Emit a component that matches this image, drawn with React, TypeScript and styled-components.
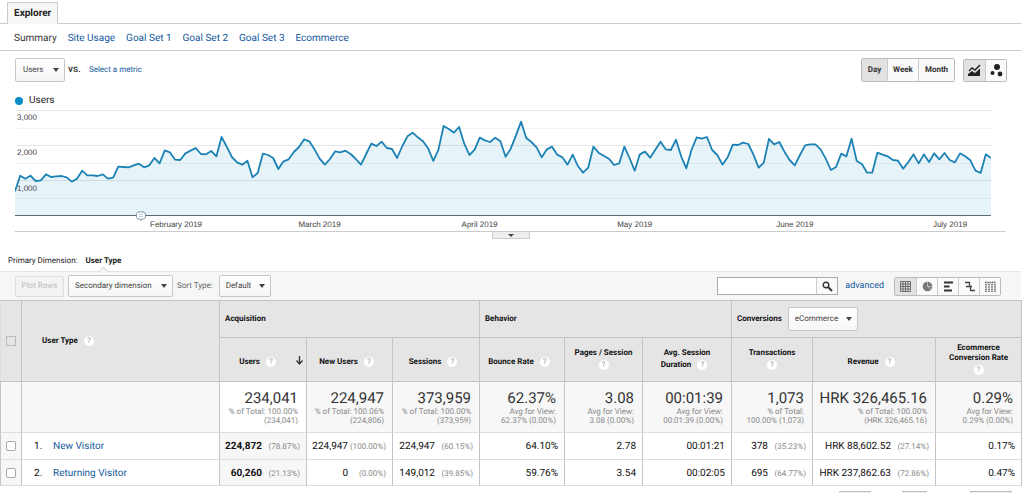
import React from "react";
import styled, { createGlobalStyle } from "styled-components";

const GlobalStyle = createGlobalStyle`
  * { box-sizing: border-box; }
  body {
    margin: 0;
    background: #fff;
    color: #333;
    font: 8px/10px Roboto, "Liberation Sans", sans-serif;
    text-rendering: geometricPrecision;
  }
  button, input, select { font: inherit; color: inherit; text-rendering: inherit; }
  a { color: #15599e; text-decoration: none; }
`;

const Page = styled.main`
  overflow: hidden;
  padding-right: 3px;
`;

const TabBar = styled.div`
  display: flex;
  height: 24px;
  padding: 2px 7px 0;
  border-bottom: 1px solid #ccc;
`;

const Tab = styled.button`
  height: 22px;
  padding: 0 6px;
  border: 1px solid #ccc;
  border-bottom: 0;
  background: #f7f7f7;
  color: #222;
  font-size: 10px;
  font-weight: 700;
`;

const SubNav = styled.nav`
  display: flex;
  align-items: center;
  gap: 11px;
  height: 27px;
  padding: 3px 14px 0;
  border-bottom: 1px solid #ccc;
  font-size: 10px;
`;

const Controls = styled.div`
  display: flex;
  align-items: center;
  gap: 8px;
  height: 38px;
  padding: 0 14px 0 15px;
`;

const Versus = styled.span`
  margin-left: -5px;
  font-size: 10px;
  font-weight: 500;
`;

const Spacer = styled.div`
  flex: 1;
`;

const SelectWrap = styled.span<{ $width: number; $height: number }>`
  position: relative;
  display: inline-flex;
  width: ${(p) => p.$width}px;
  height: ${(p) => p.$height}px;

  &::after {
    content: "";
    position: absolute;
    right: 6px;
    top: calc(50% - 2px);
    border: 3px solid transparent;
    border-top: 4px solid #444;
    border-bottom: 0;
    pointer-events: none;
  }
`;

const SelectBox = styled.select<{ $pad: number }>`
  appearance: none;
  width: 100%;
  padding: 0 0 0 ${(p) => p.$pad}px;
  border: 1px solid #c6c6c6;
  border-radius: 2px;
  background: linear-gradient(#fff, #f6f6f6);
  color: #444;
  font-weight: 400;
`;

const Group = styled.div`
  display: flex;
  border: 1px solid #bbb;
  border-radius: 2px;
`;

const GroupButton = styled.button<{ $width: number; $height: number; $active?: boolean }>`
  display: flex;
  align-items: center;
  justify-content: center;
  width: ${(p) => p.$width}px;
  height: ${(p) => p.$height}px;
  padding: 0;
  border: 0;
  border-left: 1px solid #ccc;
  background: ${(p) => (p.$active ? "#e2e2e2" : "#fafafa")};
  color: #333;
  font-weight: 700;

  &:first-child { border-left: 0; }
`;

const Legend = styled.div`
  display: flex;
  align-items: center;
  gap: 6px;
  height: 21px;
  padding: 3px 0 0 15px;
  font-size: 10px;
  color: #222;
`;

const Dot = styled.span`
  width: 8px;
  height: 8px;
  border-radius: 50%;
  background: #058dc7;
`;

const ChartArea = styled.div`
  margin: 0 15px;
  border-bottom: 1px solid #ccc;
`;

const ChartSvg = styled.svg`
  display: block;
  width: calc(100% - 15px);
  height: 121px;
  overflow: visible;

  text {
    font: 8px "Liberation Sans", Arial, sans-serif;
    fill: #444;
  }
`;

const Handle = styled.button`
  display: flex;
  align-items: center;
  justify-content: center;
  width: 38px;
  height: 7px;
  margin: 0 auto;
  padding: 0;
  border: 1px solid #ccc;
  border-top: 0;
  background: #eee;
`;

const Dimension = styled.div`
  display: flex;
  gap: 8px;
  height: 32px;
  padding: 17px 8px 0;
  color: #222;
`;

const CurrentDimension = styled.strong`
  position: relative;
  font-weight: 700;

  &::after {
    content: "";
    position: absolute;
    left: 15px;
    top: 12px;
    width: 6px;
    height: 6px;
    border: 1px solid #ddd;
    border-width: 1px 0 0 1px;
    background: #f6f6f6;
    transform: rotate(45deg);
  }
`;

const Toolbar = styled.div`
  display: flex;
  align-items: center;
  gap: 4px;
  height: 29px;
  padding: 0 20px 0 15px;
  border-top: 1px solid #e4e4e4;
  background: #f6f6f6;
`;

const PlotButton = styled.button`
  width: 49px;
  height: 21px;
  padding: 0;
  border: 1px solid #ddd;
  border-radius: 2px;
  background: #f3f3f3;
  color: #bbb;
`;

const SortLabel = styled.label`
  display: flex;
  align-items: center;
  gap: 6px;
  color: #666;
`;

const Search = styled.form`
  display: flex;
  width: 121px;
  height: 18px;
  border: 1px solid #aaa;
`;

const SearchInput = styled.input`
  flex: 1;
  min-width: 0;
  padding: 0 4px;
  border: 0;
  background: #fff;
`;

const SearchButton = styled.button`
  display: flex;
  align-items: center;
  justify-content: center;
  width: 21px;
  padding: 0;
  border: 0;
  border-left: 1px solid #ccc;
  background: #fafafa;
`;

const Advanced = styled.a`
  margin: 0 6px 0 3px;
  font-size: 9px;
`;

const DataTable = styled.table`
  width: 100%;
  table-layout: fixed;
  border-spacing: 0;
  border-right: 1px solid #c4c4c4;
`;

const HeadCell = styled.th<{ $align?: string; $pad?: string }>`
  position: relative;
  height: ${(p) => (p.$align === "left" ? 37 : 44)}px;
  padding: ${(p) => p.$pad ?? "0"};
  border-left: 1px solid #c4c4c4;
  border-top: 1px solid #c4c4c4;
  background: #e5e5e5;
  color: #111;
  font-weight: 700;
  text-align: ${(p) => p.$align ?? "center"};
  vertical-align: middle;

  &:first-child[rowspan] { border-left-color: #ddd; }
`;

const ConversionGroup = styled.label`
  display: flex;
  align-items: center;
  gap: 6px;
`;

const HelpMark = styled.span`
  display: inline-block;
  width: 10px;
  height: 10px;
  margin: 2px 6px;
  border-radius: 50%;
  background: #fff;
  color: #999;
  font-size: 8px;
  font-weight: 400;
  line-height: 10px;
  text-align: center;
  vertical-align: middle;
`;

const SortArrow = styled.svg`
  position: absolute;
  right: 2px;
  top: 17px;
`;

const TotalCell = styled.td<{ $plain?: boolean }>`
  height: 51px;
  padding: 0 8px 0 0;
  border-left: 1px solid #c4c4c4;
  border-top: 1px solid #c4c4c4;
  background: ${(p) => (p.$plain ? "#fff" : "#f7f7f7")};
  color: #888;
  line-height: 9px;
  text-align: right;
  white-space: nowrap;
`;

const BigNumber = styled.div`
  color: #333;
  font-size: 15px;
  line-height: 18px;
`;

const Cell = styled.td<{ $sorted?: boolean; $align?: string; $pad?: string }>`
  height: 27px;
  padding: ${(p) => p.$pad ?? "2px 6px 0 0"};
  border-left: 1px solid #c4c4c4;
  border-top: 1px solid #ddd;
  background: ${(p) => (p.$sorted ? "#f7f7f7" : "#fff")};
  color: #111;
  font-size: 10px;
  font-weight: ${(p) => (p.$sorted ? 700 : 400)};
  text-align: ${(p) => p.$align ?? "right"};
  white-space: nowrap;

  tr:last-child > & { border-bottom: 1px solid #ddd; }
`;

const Share = styled.span`
  display: inline-block;
  min-width: 38px;
  color: #888;
  font-size: 8px;
  font-weight: 400;
`;

const RowNumber = styled.span`
  display: inline-block;
  width: 19px;
`;

const CheckBox = styled.input`
  appearance: none;
  display: block;
  width: 10px;
  height: 10px;
  margin: 0 auto;
  border: 1px solid #aaa;
  border-radius: 2px;
  background: #fff;

  &:disabled {
    border-color: #bbb;
    border-radius: 0;
    background: #e5e5e5;
  }
`;

const Pager = styled.footer`
  display: flex;
  justify-content: flex-end;
  gap: 31px;
  height: 7px;
  padding: 5px 9px 0;
`;

const PagerControl = styled.span<{ $width: number }>`
  width: ${(p) => p.$width}px;
  border-top: 1px solid #bbb;
  background: #eee;

  &:last-child { margin-left: 12px; }
`;

/* Daily heights, measured down from the top of the plot; the axis is at 316. */
const daily = [
  244, 197, 206, 197, 213, 211, 193, 201, 199, 198, 202, 215, 206, 182, 196, 196, 198, 193, 206, 203,
  170, 171, 172, 166, 161, 172, 166, 144, 160, 121, 127, 149, 150, 130, 122, 114, 132, 133, 123, 139,
  81, 110, 141, 157, 164, 152, 202, 189, 131, 135, 144, 177, 154, 148, 126, 111, 88, 94, 118, 146,
  164, 147, 124, 127, 122, 132, 147, 164, 132, 101, 108, 95, 114, 117, 144, 108, 79, 68, 82, 94,
  115, 153, 119, 48, 57, 68, 51, 101, 135, 119, 83, 91, 96, 83, 94, 140, 116, 77, 35, 84,
  96, 112, 142, 118, 110, 134, 142, 164, 134, 168, 188, 173, 110, 128, 137, 146, 165, 160, 110, 144,
  182, 133, 125, 143, 119, 95, 118, 120, 89, 139, 175, 120, 82, 86, 81, 120, 135, 164, 142, 104,
  105, 98, 102, 134, 173, 158, 87, 103, 96, 125, 150, 166, 135, 106, 103, 103, 118, 146, 180, 171,
  131, 139, 86, 153, 162, 188, 188, 128, 134, 139, 150, 152, 176, 156, 133, 160, 133, 156, 130, 148,
  129, 150, 157, 130, 139, 151, 182, 189, 133, 144,
];

const line = daily.map((y, i) => `${i},${y}`).join(" ");
const last = daily.length - 1;

const months = [
  ["February 2019", "16.5%"],
  ["March 2019", "31.2%"],
  ["April 2019", "47.6%"],
  ["May 2019", "63.5%"],
  ["June 2019", "79.9%"],
  ["July 2019", "95.8%"],
];

function Chart() {
  return (
    <ChartSvg role="img" aria-label="Users per day">
      {[0, 18, 35, 53, 70, 88].map((y, i) => (
        <line key={y} x1="0" x2="100%" y1={y + 0.5} y2={y + 0.5} stroke={i % 2 ? "#f3f3f3" : "#e6e6e6"} />
      ))}
      <svg width="100%" height="106" viewBox={`0 0 ${last} 318`} preserveAspectRatio="none">
        <polygon points={`0,316 ${line} ${last},316`} fill="#058dc7" fillOpacity="0.1" />
        <polyline
          points={line}
          fill="none"
          stroke="#1c82b4"
          strokeWidth="1.8"
          strokeLinejoin="round"
          vectorEffect="non-scaling-stroke"
        />
      </svg>
      <line x1="0" x2="100%" y1="105.5" y2="105.5" stroke="#5b6b78" />
      <text x="2" y="10">3,000</text>
      <text x="2" y="45">2,000</text>
      <text x="2" y="81">1,000</text>
      {months.map(([name, x]) => (
        <text key={name} x={x} y="117" textAnchor="middle">{name}</text>
      ))}
      <svg x="12.9%" overflow="visible">
        <path
          d="M-3 102h6l1.500 1.500v4l-1.500 1.500h-2l-1 1.500-1-1.500h-2l-1.500-1.500v-4z"
          fill="#fff"
          stroke="#7d95a8"
        />
        <path d="M-2 104.500h4M-2 106.500h4" stroke="#a9bac8" strokeWidth="0.700" />
      </svg>
    </ChartSvg>
  );
}

function Dropdown({ label, width, height, pad = 6 }: { label: string; width: number; height: number; pad?: number }) {
  return (
    <SelectWrap $width={width} $height={height}>
      <SelectBox $pad={pad} aria-label={label}>
        <option>{label}</option>
      </SelectBox>
    </SelectWrap>
  );
}

const Help = () => <HelpMark>?</HelpMark>;

const viewIcons: [string, React.ReactNode][] = [
  ["Data", <path d="M.5.500h10v10H.5zM3 .5v10M5.500.500v10M8 .5v10M.5 3h10M.5 5.500h10M.5 8h10" fill="none" stroke="#555" strokeWidth="0.800" />],
  ["Percentage", <><circle cx="5.500" cy="5.500" r="4.800" fill="#777" /><path d="M5.500 5.500V.7M5.500 5.500h4.800M5.500 5.500l3.500 3.300" stroke="#ddd" strokeWidth="0.600" /></>],
  ["Performance", <path d="M1 1.500h9M1 5.500h5.500M1 9.500h8" stroke="#333" strokeWidth="2" />],
  ["Comparison", <path d="M1 1.500h5M5.500 1.500v4M2 5.500h6M6.500 5.500v4M6 9.500h5" fill="none" stroke="#444" strokeWidth="1.300" />],
  ["Pivot", <path d="M0 1.500h11M1 3v8M4 3v8M7 3v8M10 3v8" fill="none" stroke="#555" strokeWidth="1.400" strokeDasharray="1.500 0.700" />],
];

const columns = [21, 198, 87, 86, 87, 85, 78, 89, 81, 123, 86];

const totals = [
  ["234,041", "% of Total: 100.00%", "(234,041)"],
  ["224,947", "% of Total: 100.06%", "(224,806)"],
  ["373,959", "% of Total: 100.00%", "(373,959)"],
  ["62.37%", "Avg for View:", "62.37% (0.00%)"],
  ["3.08", "Avg for View:", "3.08 (0.00%)"],
  ["00:01:39", "Avg for View:", "00:01:39 (0.00%)"],
  ["1,073", "% of Total:", "100.00% (1,073)"],
  ["HRK 326,465.16", "% of Total: 100.00%", "(HRK 326,465.16)"],
  ["0.29%", "Avg for View:", "0.29% (0.00%)"],
];

const visitors = [
  {
    name: "New Visitor",
    values: [["224,872", "(78.87%)"], ["224,947", "(100.00%)"], ["224,947", "(60.15%)"], ["64.10%"], ["2.78"], ["00:01:21"], ["378", "(35.23%)"], ["HRK 88,602.52", "(27.14%)"], ["0.17%"]],
  },
  {
    name: "Returning Visitor",
    values: [["60,260", "(21.13%)"], ["0", "(0.00%)"], ["149,012", "(39.85%)"], ["59.76%"], ["3.54"], ["00:02:05"], ["695", "(64.77%)"], ["HRK 237,862.63", "(72.86%)"], ["0.47%"]],
  },
];

function Report() {
  return (
    <DataTable>
      <colgroup>
        {columns.map((w, i) => <col key={i} width={w} />)}
      </colgroup>
      <thead>
        <tr>
          <HeadCell rowSpan={2}><CheckBox type="checkbox" disabled aria-label="Select all rows" /></HeadCell>
          <HeadCell rowSpan={2} $align="left" $pad="0 0 0 20px">User Type<Help /></HeadCell>
          <HeadCell colSpan={3} $align="left" $pad="0 5px">Acquisition</HeadCell>
          <HeadCell colSpan={3} $align="left" $pad="0 5px">Behavior</HeadCell>
          <HeadCell colSpan={3} $align="left" $pad="0 5px">
            <ConversionGroup>Conversions <Dropdown label="eCommerce" width={70} height={24} /></ConversionGroup>
          </HeadCell>
        </tr>
        <tr>
          <HeadCell $pad="4px 5px 0 0">
            Users<Help />
            <SortArrow width="9" height="11" viewBox="0 0 9 11">
              <path d="M4.500 1v8M1.500 5.500l3 3.500 3-3.500" fill="none" stroke="#333" strokeWidth="1.300" />
            </SortArrow>
          </HeadCell>
          <HeadCell $pad="4px 0 0">New Users<Help /></HeadCell>
          <HeadCell $pad="4px 0 0">Sessions<Help /></HeadCell>
          <HeadCell $pad="4px 0 0">Bounce Rate<Help /></HeadCell>
          <HeadCell>Pages / Session<br /><Help /></HeadCell>
          <HeadCell>Avg. Session<br />Duration<Help /></HeadCell>
          <HeadCell>Transactions<br /><Help /></HeadCell>
          <HeadCell $pad="4px 0 0">Revenue<Help /></HeadCell>
          <HeadCell>Ecommerce<br />Conversion Rate<br /><Help /></HeadCell>
        </tr>
      </thead>
      <tbody>
        <tr>
          <TotalCell />
          <TotalCell />
          {totals.map(([big, first, second], i) => (
            <TotalCell key={i} $plain={i === 0}>
              <BigNumber>{big}</BigNumber>
              {first}<br />{second}
            </TotalCell>
          ))}
        </tr>
        {visitors.map((v, row) => (
          <tr key={v.name}>
            <Cell $sorted $align="center" $pad="0"><CheckBox type="checkbox" aria-label={v.name} /></Cell>
            <Cell $align="left" $pad="2px 0 0 12px"><RowNumber>{row + 1}.</RowNumber><a href="#visitor">{v.name}</a></Cell>
            {v.values.map(([value, share], i) => (
              <Cell key={i} $sorted={i === 0}>{value}{share && <Share>{share}</Share>}</Cell>
            ))}
          </tr>
        ))}
      </tbody>
    </DataTable>
  );
}

export default function App() {
  return (
    <Page>
      <GlobalStyle />
      <TabBar><Tab>Explorer</Tab></TabBar>
      <SubNav>
        <span>Summary</span>
        {["Site Usage", "Goal Set 1", "Goal Set 2", "Goal Set 3", "Ecommerce"].map((t) => (
          <a key={t} href="#report">{t}</a>
        ))}
      </SubNav>
      <Controls>
        <Dropdown label="Users" width={50} height={24} pad={7} />
        <Versus>vs.</Versus>
        <a href="#metric">Select a metric</a>
        <Spacer />
        <Group>
          <GroupButton $width={25} $height={22} $active>Day</GroupButton>
          <GroupButton $width={31} $height={22}>Week</GroupButton>
          <GroupButton $width={36} $height={22}>Month</GroupButton>
        </Group>
        <Group>
          <GroupButton $width={21} $height={21} $active aria-label="Line chart">
            <svg width="13" height="12" viewBox="0 0 13 12">
              <path d="M1 7l3-3 3 2 5-5" fill="none" stroke="#222" strokeWidth="1.500" />
              <path d="M0 12V10l4-3 3 2 5-4.500V12z" fill="#222" />
            </svg>
          </GroupButton>
          <GroupButton $width={21} $height={21} aria-label="Motion chart">
            <svg width="13" height="13" viewBox="0 0 13 13" fill="#222">
              <circle cx="7" cy="3" r="3" />
              <circle cx="2.500" cy="9" r="2" />
              <circle cx="10" cy="10" r="2.400" />
            </svg>
          </GroupButton>
        </Group>
      </Controls>
      <Legend><Dot />Users</Legend>
      <ChartArea><Chart /></ChartArea>
      <Handle aria-label="Collapse chart">
        <svg width="6" height="3" viewBox="0 0 6 3"><path d="M0 0h6L3 3z" fill="#444" /></svg>
      </Handle>
      <Dimension>Primary Dimension: <CurrentDimension>User Type</CurrentDimension></Dimension>
      <Toolbar>
        <PlotButton disabled>Plot Rows</PlotButton>
        <Dropdown label="Secondary dimension" width={105} height={22} />
        <SortLabel>Sort Type: <Dropdown label="Default" width={52} height={22} /></SortLabel>
        <Spacer />
        <Search>
          <SearchInput type="search" aria-label="Search rows" />
          <SearchButton type="button" aria-label="Search">
            <svg width="11" height="11" viewBox="0 0 11 11" fill="none" stroke="#333">
              <circle cx="4" cy="4" r="2.800" strokeWidth="1.400" />
              <path d="M6 6l4 4" strokeWidth="2" />
            </svg>
          </SearchButton>
        </Search>
        <Advanced href="#advanced">advanced</Advanced>
        <Group>
          {viewIcons.map(([name, icon], i) => (
            <GroupButton key={name} $width={21} $height={17} $active={i === 0} aria-label={name}>
              <svg width="11" height="11" viewBox="0 0 11 11">{icon}</svg>
            </GroupButton>
          ))}
        </Group>
      </Toolbar>
      <Report />
      <Pager>
        <PagerControl $width={32} />
        <PagerControl $width={25} />
        <PagerControl $width={42} />
      </Pager>
    </Page>
  );
}
